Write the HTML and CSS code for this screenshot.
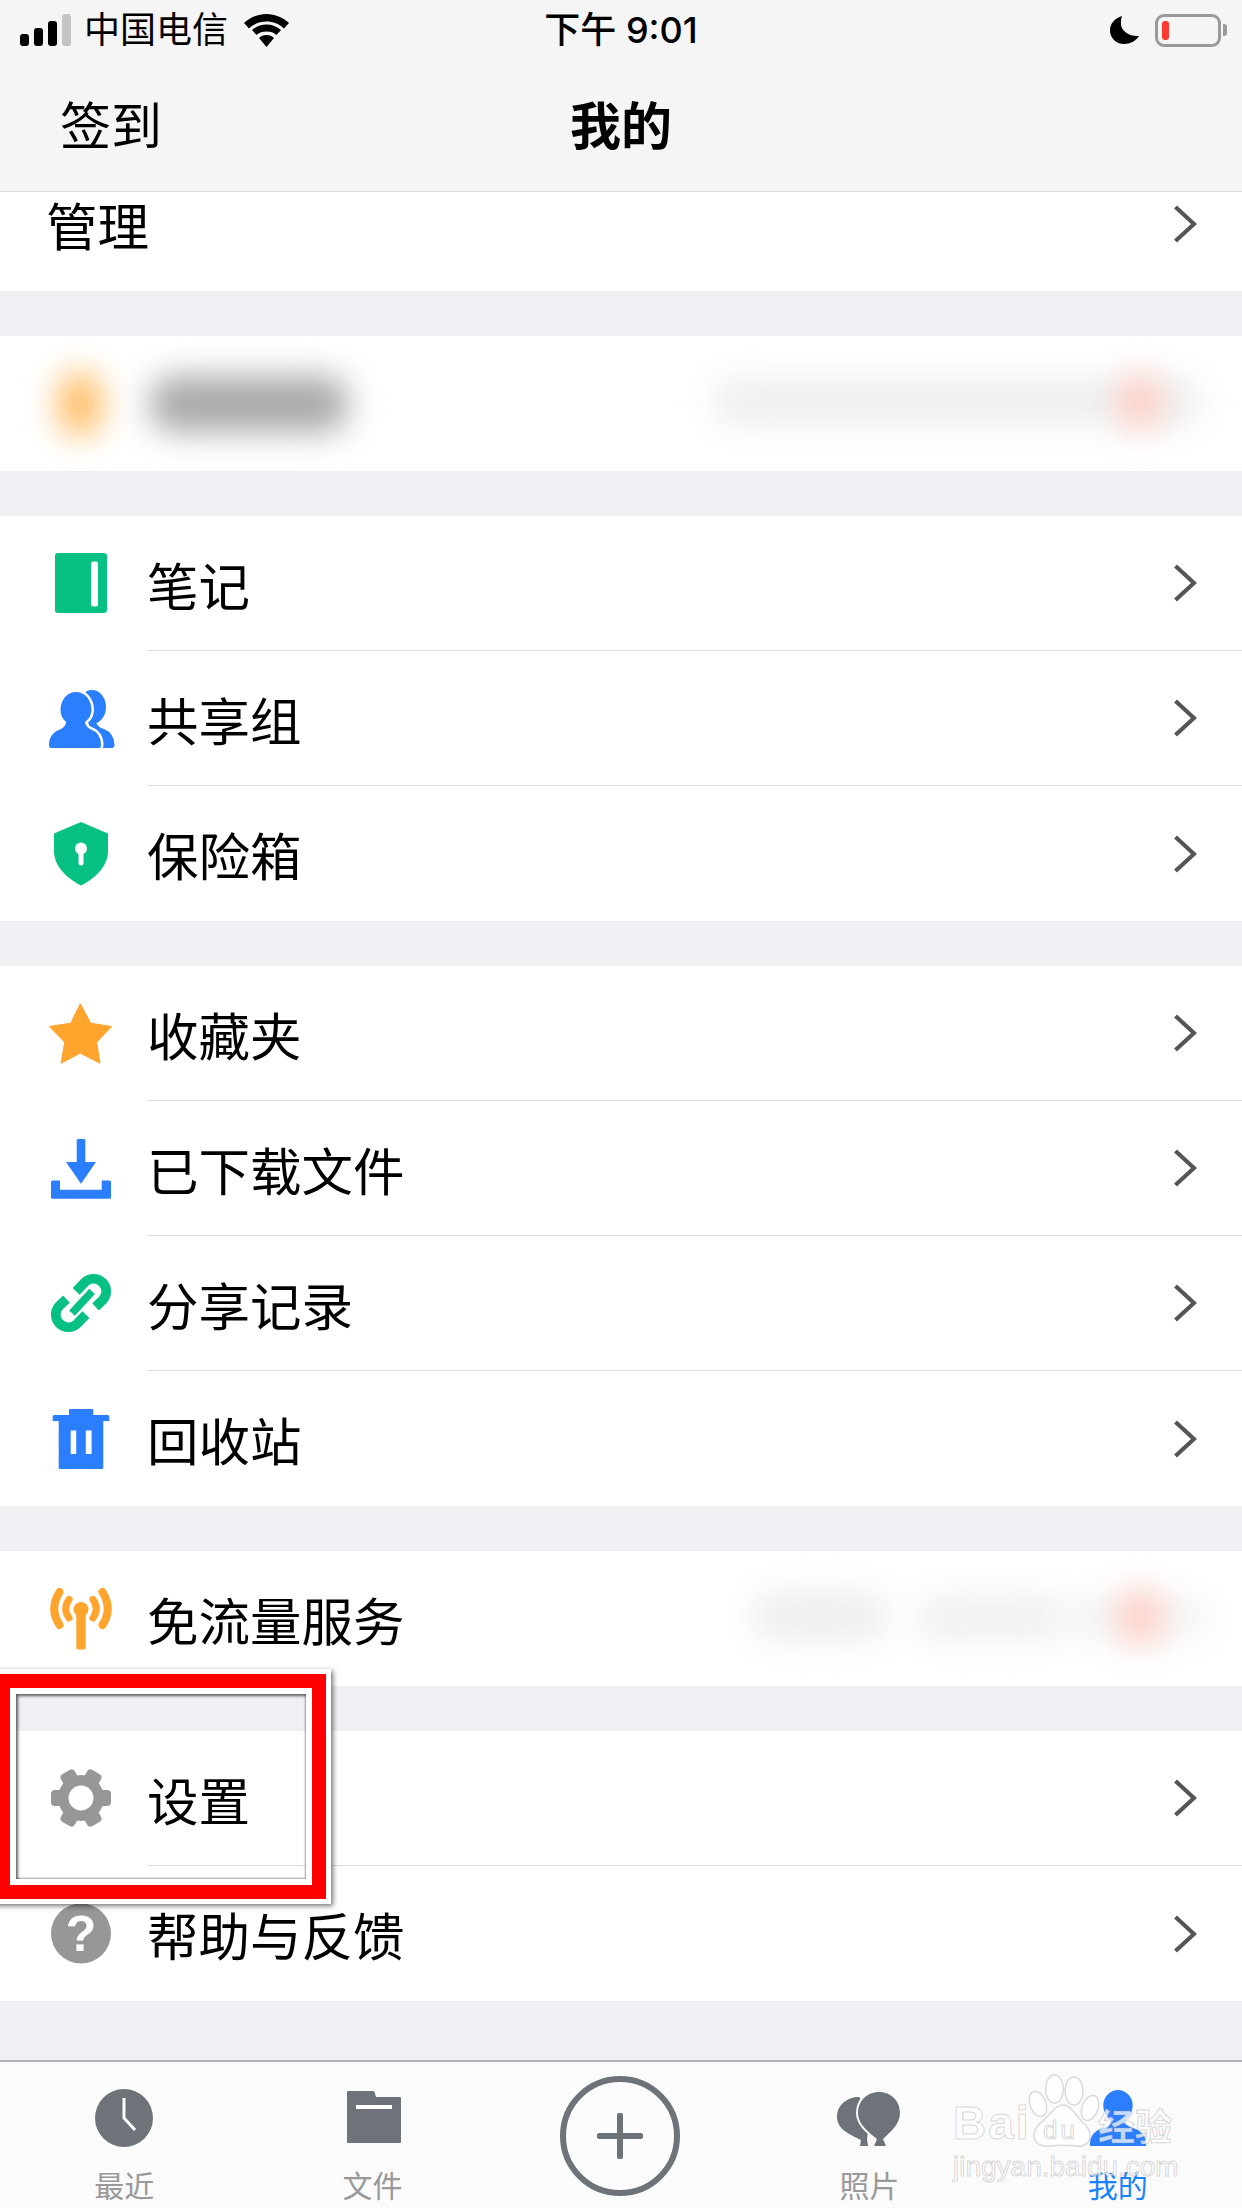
FILE: index.html
```html
<!DOCTYPE html>
<html lang="zh-CN">
<head>
    <meta charset="UTF-8">
    <meta name="viewport" content="width=device-width, initial-scale=1.0">
    <title>我的</title>
    <link rel="stylesheet" href="styles.css">
</head>
<body>

<div id="page">
    <header class="top">
        <div class="status">
            <div class="status-left">
                <div class="signal">
                    <span class="bar bar-1"></span>
                    <span class="bar bar-2"></span>
                    <span class="bar bar-3"></span>
                    <span class="bar bar-4"></span>
                </div>
                <span class="carrier">中国电信</span>
                <svg class="wifi" viewBox="0 0 45 33">
                    <path d="M22.5 0C14 0 6 3.500 0 9L5 14.500C9.500 10 16 7.500 22.500 7.500S35.500 10 40 14.500L45 9C39 3.500 31 0 22.500 0Z"/>
                    <path d="M22.500 10.500C17 10.500 12 12.500 8 16L12.500 21C15 18.500 18.500 17.500 22.500 17.500S30 18.500 32.500 21L37 16C33 12.500 28 10.500 22.500 10.500Z"/>
                    <path d="M22.500 21C19.500 21 17 22 15 24L22.500 33L30 24C28 22 25.500 21 22.500 21Z"/>
                </svg>
            </div>
            <span class="clock">下午 9:01</span>
            <div class="status-right">
                <svg class="moon" viewBox="0 0 29 28">
                    <path d="M12 0C5 2 0 7.500 0 14.500C0 22 6 28 14 28C20 28 26 25 29 20C20 21 11 15 11 8C11 5 11 2.500 12 0Z"/>
                </svg>
                <div class="battery"><span class="battery-level"></span></div>
                <span class="battery-cap"></span>
            </div>
        </div>
        <div class="nav">
            <span class="nav-left">签到</span>
            <span class="nav-title">我的</span>
            <span></span>
        </div>
    </header>

    <main class="list">
        <div class="group group-cut">
            <div class="row row-plain">
                <div class="row-body">
                    <span>管理</span>
                    <svg class="chevron" viewBox="0 0 24 38"><path d="M2.500 2L21 19L2.500 36"/></svg>
                </div>
            </div>
        </div>

        <div class="group">
            <div class="row">
                <div class="smudge smudge-icon"></div>
                <div class="smudge smudge-name"></div>
                <div class="smudge smudge-note"></div>
                <div class="smudge smudge-dot"></div>
            </div>
        </div>

        <div class="group">
            <div class="row">
                <svg class="icon" viewBox="0 0 64 64">
                    <rect x="6" y="2" width="52" height="60" rx="3" fill="#06c084"/>
                    <rect x="42" y="10.500" width="7" height="45" rx="2" fill="#fff"/>
                </svg>
                <div class="row-body">
                    <span>笔记</span>
                    <svg class="chevron" viewBox="0 0 24 38"><path d="M2.500 2L21 19L2.500 36"/></svg>
                </div>
            </div>
            <div class="row">
                <svg class="icon" viewBox="0 0 64 64">
                    <ellipse cx="43" cy="21" rx="14" ry="17" fill="#2b7fff"/>
                    <path d="M40 32L48 38Q50 42 55 43Q65 47 65.500 59Q65.500 62 63 62H40Z" fill="#2b7fff"/>
                    <g fill="#2b7fff" stroke="#fff" stroke-width="5" paint-order="stroke">
                        <path d="M27 6C18 6 11.500 14 11.500 24C11.500 29 13.500 33 17 36Q17 40 12 43Q0 47 0 59Q0 62 2 62H50Q52 62 52 59Q52 47 41 43Q36 40 36 36Q42.500 31 42.500 24C42.500 14 36 6 27 6Z"/>
                    </g>
                </svg>
                <div class="row-body">
                    <span>共享组</span>
                    <svg class="chevron" viewBox="0 0 24 38"><path d="M2.500 2L21 19L2.500 36"/></svg>
                </div>
            </div>
            <div class="row row-last">
                <svg class="icon" viewBox="0 0 64 64">
                    <path d="M32 1L59 12.500V30C59 46 45 58 32 64.500C19 58 5 46 5 30V12.500Z" fill="#06c084"/>
                    <circle cx="32" cy="27.500" r="6" fill="#fff"/>
                    <rect x="29.500" y="28" width="5" height="16.500" rx="2.500" fill="#fff"/>
                </svg>
                <div class="row-body">
                    <span>保险箱</span>
                    <svg class="chevron" viewBox="0 0 24 38"><path d="M2.500 2L21 19L2.500 36"/></svg>
                </div>
            </div>
        </div>

        <div class="group">
            <div class="row">
                <svg class="icon" viewBox="0 0 64 64">
                    <path d="M31.300 2.800L41.700 22.200L62.700 25.500L47.700 41.200L51 62.200L31.300 52.200L12 62.200L15.700 41.200L.3 25.500L21.700 22.200Z" fill="#ffa52e" stroke="#ffa52e" stroke-linejoin="round"/>
                </svg>
                <div class="row-body">
                    <span>收藏夹</span>
                    <svg class="chevron" viewBox="0 0 24 38"><path d="M2.500 2L21 19L2.500 36"/></svg>
                </div>
            </div>
            <div class="row">
                <svg class="icon" viewBox="0 0 64 64">
                    <path d="M27.700 4Q27.700 3 29 3H35Q36.300 3 36.300 4V26H47L32 47.800L17 26H27.700Z" fill="#2b7fff"/>
                    <path d="M2 46Q2 44.500 3.500 44.500H11V53.800H52.700V44.500H60.500Q62 44.500 62 46V61.500Q62 62.800 60.500 62.800H3.500Q2 62.800 2 61.500Z" fill="#2b7fff"/>
                </svg>
                <div class="row-body">
                    <span>已下载文件</span>
                    <svg class="chevron" viewBox="0 0 24 38"><path d="M2.500 2L21 19L2.500 36"/></svg>
                </div>
            </div>
            <div class="row">
                <svg class="icon" viewBox="0 0 64 66">
                    <g fill="none" stroke="#06c084" stroke-width="10">
                        <path d="M27 21L35.800 11.800A13 13 0 0 1 54.200 30.200L47 37"/>
                        <path d="M37 45L28.200 54.200A13 13 0 0 1 9.800 35.800L17 29"/>
                        <path d="M22.700 43.500L43.500 21" stroke-width="8"/>
                    </g>
                </svg>
                <div class="row-body">
                    <span>分享记录</span>
                    <svg class="chevron" viewBox="0 0 24 38"><path d="M2.500 2L21 19L2.500 36"/></svg>
                </div>
            </div>
            <div class="row row-last">
                <svg class="icon" viewBox="0 0 64 64">
                    <path d="M20 9V4Q20 3 21 3H43.300Q44.300 3 44.300 4V9H59Q60.300 9 60.300 10.500V15H54.300V62Q54.300 63 53 63H11Q9.700 63 9.700 62V15H3.700V10.500Q3.700 9 5 9Z" fill="#2b7fff"/>
                    <rect x="21.700" y="24.500" width="5.500" height="23.500" fill="#fff"/>
                    <rect x="36.800" y="24.500" width="5.800" height="23.500" fill="#fff"/>
                </svg>
                <div class="row-body">
                    <span>回收站</span>
                    <svg class="chevron" viewBox="0 0 24 38"><path d="M2.500 2L21 19L2.500 36"/></svg>
                </div>
            </div>
        </div>

        <div class="group">
            <div class="row row-last">
                <svg class="icon" viewBox="0 0 64 64">
                    <g fill="none" stroke="#ffa52e" stroke-linecap="round">
                        <path d="M10.500 6Q0 23 10.500 39" stroke-width="8"/>
                        <path d="M53.500 6Q64 23 53.500 39" stroke-width="8"/>
                        <path d="M20 13.500Q13.500 23 20 32" stroke-width="7"/>
                        <path d="M44 13.500Q50.500 23 44 32" stroke-width="7"/>
                    </g>
                    <circle cx="32" cy="23.500" r="7.500" fill="#ffa52e"/>
                    <rect x="27.300" y="24" width="9.400" height="39.500" rx="1.500" fill="#ffa52e"/>
                </svg>
                <div class="row-body">
                    <span>免流量服务</span>
                </div>
                <div class="smudge smudge-free-a"></div>
                <div class="smudge smudge-free-b"></div>
                <div class="smudge smudge-free-c"></div>
                <div class="smudge smudge-dot"></div>
            </div>
        </div>

        <div class="group">
            <div class="row">
                <svg class="icon" viewBox="0 0 64 64">
                    <g fill="#979797">
                        <circle cx="32" cy="32" r="23"/>
                        <rect x="24" y="2" width="16" height="14" rx="4" transform="rotate(30 32 32)"/>
                        <rect x="24" y="2" width="16" height="14" rx="4" transform="rotate(90 32 32)"/>
                        <rect x="24" y="2" width="16" height="14" rx="4" transform="rotate(150 32 32)"/>
                        <rect x="24" y="2" width="16" height="14" rx="4" transform="rotate(210 32 32)"/>
                        <rect x="24" y="2" width="16" height="14" rx="4" transform="rotate(270 32 32)"/>
                        <rect x="24" y="2" width="16" height="14" rx="4" transform="rotate(330 32 32)"/>
                    </g>
                    <circle cx="32" cy="32" r="12.500" fill="#fff"/>
                </svg>
                <div class="row-body">
                    <span>设置</span>
                    <svg class="chevron" viewBox="0 0 24 38"><path d="M2.500 2L21 19L2.500 36"/></svg>
                </div>
            </div>
            <div class="row row-last">
                <svg class="icon" viewBox="0 0 64 64">
                    <circle cx="32" cy="32.500" r="30" fill="#979797"/>
                    <text class="help-mark" x="32" y="50" text-anchor="middle">?</text>
                </svg>
                <div class="row-body">
                    <span>帮助与反馈</span>
                    <svg class="chevron" viewBox="0 0 24 38"><path d="M2.500 2L21 19L2.500 36"/></svg>
                </div>
            </div>
        </div>
    </main>

    <nav class="tabs">
        <div class="tab">
            <svg class="tab-icon" viewBox="0 0 58 58">
                <circle cx="29" cy="29" r="29" fill="#6d7378"/>
                <path d="M29 9V29L40 41" fill="none" stroke="#fff" stroke-width="3"/>
            </svg>
            <span>最近</span>
        </div>
        <div class="tab">
            <svg class="tab-icon" viewBox="0 0 58 58">
                <path d="M3 3Q3 2 4 2H29Q30 2 30.500 3L32 8H56Q57 8 57 9V53Q57 54 56 54H4Q3 54 3 53Z" fill="#6d7378"/>
                <rect x="12" y="16" width="36" height="4" fill="#fff"/>
            </svg>
            <span>文件</span>
        </div>
        <div class="tab tab-add">
            <div class="add-ring">
                <span class="add-h"></span>
                <span class="add-v"></span>
            </div>
        </div>
        <div class="tab">
            <svg class="tab-icon tab-balloon" viewBox="0 0 64 56">
                <path d="M22 6C10 6 0 14 0 26C0 38 12 43 24 49L23 55H31L30 48L34 20Z" fill="#6d7378"/>
                <path d="M42 1C54 1 63 10 63 22C63 34 52 42 46 48L49 55H37L40 48C33 42 21 34 21 22C21 10 30 1 42 1Z" fill="#6d7378" stroke="#fbfbfb" stroke-width="4" paint-order="stroke"/>
            </svg>
            <span>照片</span>
        </div>
        <div class="tab tab-on">
            <svg class="tab-icon" viewBox="0 0 58 58">
                <path d="M29 1C37 1 43.700 8 43.700 16C43.700 22 41 27 37 30V34Q37 37 44 39Q57 43 57 55V57H1V55Q1 43 14 39Q21 37 21 34V30C17 27 14.300 22 14.300 16C14.300 8 21 1 29 1Z" fill="#2b7fff"/>
            </svg>
            <span>我的</span>
        </div>
    </nav>

    <!-- 截图上的红框 -->
    <div class="mark">
        <div class="mark-red">
            <div class="mark-inner"></div>
        </div>
    </div>

    <!-- 水印 -->
    <div class="stamp">
        <svg class="stamp-paw" viewBox="0 0 70 76">
            <g fill="rgba(255,255,255,.72)" stroke="rgba(130,130,130,.28)" stroke-width="1.500">
                <ellipse cx="24.500" cy="15" rx="9" ry="14"/>
                <ellipse cx="44" cy="17" rx="9" ry="14"/>
                <ellipse cx="8" cy="30" rx="8" ry="13" transform="rotate(-20 8 30)"/>
                <ellipse cx="60" cy="34" rx="8" ry="13" transform="rotate(20 60 34)"/>
                <path d="M33 31C26 31 22 38 17 43C10 49 4 54 4 62C4 69 11 73 20 72C26 71 40 71 47 72C55 73 61 68 60 60C59 52 52 49 47 42C43 36 39 31 33 31Z"/>
            </g>
        </svg>
        <span class="stamp-bai">Bai</span>
        <span class="stamp-du">du</span>
        <span class="stamp-cn">经验</span>
        <span class="stamp-url">jingyan.baidu.com</span>
    </div>
</div>

</body>
</html>
```

FILE: styles.css
```css
* {
    box-sizing: border-box;
}

body {
    margin: 0;
    font-family: Inter, 'Noto Sans CJK SC', sans-serif;
    color: #000;
    background-color: #efeff4;
}

#page {
    position: relative;
    width: 1242px;
    height: 2208px;
    overflow: hidden;
    display: flex;
    flex-direction: column;
}

/* status bar + nav */
.top {
    height: 192px;
    background-color: #f5f5f5;
    border-bottom: 1px solid #dcdcdc;
}

.status {
    height: 60px;
    display: grid;
    grid-template-columns: 1fr auto 1fr;
    align-items: center;
}

.status-left {
    display: flex;
    align-items: center;
    padding-left: 20px;
}

.signal {
    display: flex;
    align-items: flex-end;
    gap: 5px;
    height: 32px;
}

.bar {
    width: 9px;
    border-radius: 3px;
    background-color: #000;
}

.bar-1 { height: 12px; }
.bar-2 { height: 18px; }
.bar-3 { height: 25px; }
.bar-4 { height: 32px; background-color: #c4c4c4; }

.carrier {
    margin-left: 13px;
    font-size: 36px;
    line-height: 44px;
}

.wifi {
    width: 45px;
    height: 33px;
    margin-left: 16px;
}

.clock {
    font-size: 36px;
    font-weight: 500;
    line-height: 44px;
}

.status-right {
    display: flex;
    align-items: center;
    justify-content: flex-end;
    padding-right: 15px;
}

.moon {
    width: 29px;
    height: 28px;
    margin-right: 16px;
}

.battery {
    width: 66px;
    height: 33px;
    padding: 4px;
    border: 3px solid #9a9a9a;
    border-radius: 9px;
}

.battery-level {
    display: block;
    width: 7px;
    height: 100%;
    border-radius: 3px;
    background-color: #ff3b30;
}

.battery-cap {
    width: 4px;
    height: 12px;
    margin-left: 2px;
    border-radius: 0 3px 3px 0;
    background-color: #9a9a9a;
}

.nav {
    height: 131px;
    padding-bottom: 5px;
    display: grid;
    grid-template-columns: 1fr auto 1fr;
    align-items: center;
    font-size: 51px;
}

.nav-left {
    padding-left: 60px;
}

.nav-title {
    font-weight: 700;
}

/* list */
.list {
    flex: 1;
    min-height: 0;
    font-size: 51.500px;
}

.group {
    margin-top: 45px;
    background-color: #fff;
}

.group-cut {
    height: 99px;
    margin-top: 0;
    overflow: hidden;
}

.row {
    position: relative;
    height: 135px;
    display: flex;
    padding-left: 49px;
}

.row-plain {
    margin-top: -36px;
    padding-left: 46px;
}

.icon {
    flex: none;
    width: 64px;
    height: 64px;
    margin-top: 35px;
    overflow: visible;
}

.row-body {
    flex: 1;
    display: flex;
    align-items: center;
    justify-content: space-between;
    margin-left: 34px;
    padding-right: 45px;
    border-bottom: 1px solid #dedede;
}

.row-plain .row-body {
    margin-left: 0;
    border-bottom: 0;
}

.row-last .row-body {
    border-bottom: 0;
}

.chevron {
    flex: none;
    width: 24px;
    height: 38px;
    fill: none;
    stroke: #555;
    stroke-width: 4.200;
}

.help-mark {
    font-family: 'Liberation Sans', sans-serif;
    font-size: 50px;
    font-weight: 700;
    fill: #fff;
}

/* blurred out bits of the screenshot */
.smudge {
    position: absolute;
    border-radius: 24px;
    filter: blur(16px);
}

.smudge-icon {
    left: 58px;
    top: 36px;
    width: 44px;
    height: 64px;
    background-color: #ffbd66;
}

.smudge-name {
    left: 150px;
    top: 40px;
    width: 198px;
    height: 56px;
    background-color: #a9a9a9;
}

.smudge-note {
    left: 712px;
    top: 42px;
    width: 490px;
    height: 48px;
    background-color: #eeeff0;
}

.smudge-dot {
    left: 1118px;
    top: 38px;
    width: 44px;
    height: 56px;
    background-color: #ffcfc6;
}

.smudge-free-a {
    left: 752px;
    top: 40px;
    width: 136px;
    height: 50px;
    background-color: #edeef0;
}

.smudge-free-b {
    left: 915px;
    top: 44px;
    width: 150px;
    height: 46px;
    background-color: #eff0f1;
}

.smudge-free-c {
    left: 1060px;
    top: 46px;
    width: 150px;
    height: 42px;
    background-color: #f4f4f4;
}

/* bottom tabs */
.tabs {
    flex: none;
    height: 148px;
    display: grid;
    grid-template-columns: repeat(5, 1fr);
    background-color: #fbfbfb;
    border-top: 2px solid #b2b2b2;
}

.tab {
    position: relative;
    display: flex;
    flex-direction: column;
    align-items: center;
    padding-top: 27px;
    font-size: 30px;
    line-height: 24px;
    color: #999;
}

.tab-icon {
    width: 58px;
    height: 58px;
    margin-bottom: 27px;
}

.tab-balloon {
    width: 64px;
    height: 56px;
    margin-top: 2px;
}

.tab-on {
    color: #1a82fb;
}

.tab-add {
    padding-top: 14px;
    padding-right: 2px;
}

.add-ring {
    position: relative;
    width: 120px;
    height: 120px;
    border: 6px solid #6d7378;
    border-radius: 50%;
}

.add-h,
.add-v {
    position: absolute;
    border-radius: 2px;
    background-color: #6d7378;
}

.add-h {
    left: 31px;
    top: 51px;
    width: 46px;
    height: 6px;
}

.add-v {
    left: 51px;
    top: 31px;
    width: 6px;
    height: 46px;
}

/* red frame */
.mark {
    position: absolute;
    left: -9px;
    top: 1669px;
    width: 340px;
    height: 235px;
    border: 5px solid #fff;
    box-shadow: 2px 2px 5px rgba(0, 0, 0, 0.55);
}

.mark-red {
    height: 100%;
    border: 14px solid #f00;
}

.mark-inner {
    height: 100%;
    border: 6px solid #fff;
    position: relative;
}

.mark-inner::after {
    content: '';
    position: absolute;
    inset: 0;
    box-shadow: inset 2px 2px 3px rgba(0, 0, 0, 0.6), inset -1px -1px 2px rgba(0, 0, 0, 0.35);
}

/* watermark */
.stamp {
    position: absolute;
    left: 950px;
    top: 2070px;
    width: 232px;
    height: 118px;
    color: rgba(255, 255, 255, 0.72);
    -webkit-text-stroke: 1px rgba(130, 130, 130, 0.32);
}

.stamp-paw {
    position: absolute;
    left: 80px;
    top: 4px;
    width: 70px;
    height: 76px;
    overflow: visible;
}

.stamp-bai,
.stamp-du,
.stamp-cn,
.stamp-url {
    position: absolute;
    white-space: nowrap;
}

.stamp-bai {
    left: 3px;
    top: 25px;
    font-family: 'Liberation Sans', sans-serif;
    font-size: 46px;
    font-weight: 700;
    line-height: 56px;
    letter-spacing: 2px;
}

.stamp-du {
    left: 93px;
    top: 42px;
    font-family: 'Liberation Sans', sans-serif;
    font-size: 26px;
    line-height: 36px;
    letter-spacing: 3px;
}

.stamp-cn {
    left: 148px;
    top: 30px;
    font-family: 'Noto Sans CJK SC', sans-serif;
    font-size: 37px;
    font-weight: 700;
    line-height: 50px;
}

.stamp-url {
    left: 3px;
    top: 89px;
    font-family: 'Liberation Sans', sans-serif;
    font-size: 28px;
    line-height: 16px;
}
```
